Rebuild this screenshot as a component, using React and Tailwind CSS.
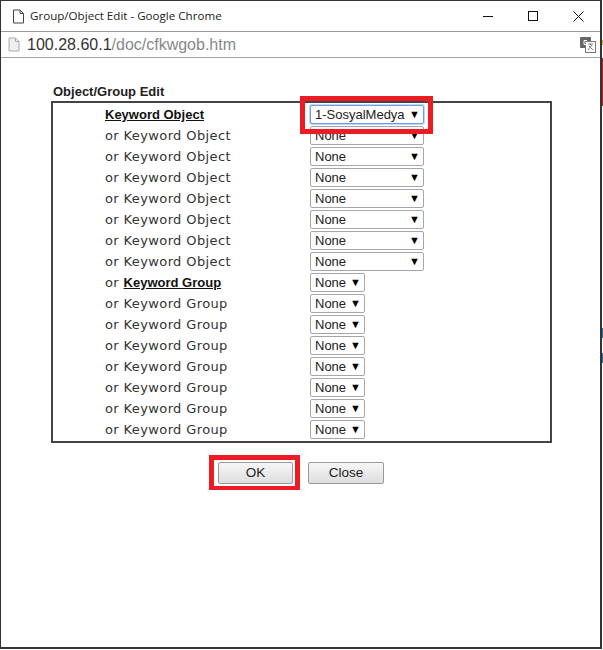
import React from 'react';

const objectRows = [
  { label: 'Keyword Object', bold: true, value: '1-SosyalMedya', focus: true },
  ...Array(7).fill({ label: 'or Keyword Object', value: 'None' }),
];

const groupRows = [
  { label: 'Keyword Group', bold: true, prefix: true, value: 'None' },
  ...Array(7).fill({ label: 'or Keyword Group', value: 'None' }),
];

// looks like a closed native select
const FakeSelect = ({ value, wide, focus }) => (
  <div
    className={`h-[19px] flex items-center justify-between bg-white rounded-[2px] border pl-[4px] pr-[3px] text-[13px] text-[#222] ${wide ? 'w-[114px]' : 'w-[55px]'} ${focus ? 'border-[#6d9eeb] shadow-[0_0_0_1px_#c4d7f7]' : 'border-[#a6a6a6]'}`}
  >
    <span className="leading-none">{value}</span>
    <span className="text-[11px] leading-none text-black">▼</span>
  </div>
);

const Row = ({ row, wide }) => (
  <div className="h-[21px] flex items-center">
    <div className="w-[205px] pl-[52px] shrink-0 text-[13px] whitespace-nowrap text-[#333]">
      {row.bold ? (
        <>
          {row.prefix && <span className="font-['DejaVu_Sans',sans-serif] tracking-[0.38px]">or </span>}
          <span className="font-bold underline text-[#111]">{row.label}</span>
        </>
      ) : (
        <span className="font-['DejaVu_Sans',sans-serif] tracking-[0.38px]">{row.label}</span>
      )}
    </div>
    <div className="pl-[52px]">
      <FakeSelect value={row.value} wide={wide} focus={row.focus} />
    </div>
  </div>
);

export default function App() {
  return (
    <div className="relative w-[603px] h-[650px] overflow-hidden bg-white font-['Liberation_Sans',Arial,sans-serif]">
      <div className="h-[649px] w-[602px] border border-[#333] border-b-2 border-r-2 bg-white flex flex-col">
        {/* Title bar */}
        <div className="h-[31px] shrink-0 flex items-center border-b border-[#999]">
          <svg className="ml-[11px]" width="13" height="15" viewBox="0 0 13 15" fill="none" stroke="#444" strokeWidth="1">
            <path d="M1.5 1h6.5l3.5 3.5v9.5h-10z M8 1v3.5h3.5" />
          </svg>
          <span className="ml-[5px] text-[11.6px] text-[#222] font-['Open_Sans',sans-serif]">Group/Object Edit - Google Chrome</span>
          <div className="ml-auto flex items-center pr-[16px] gap-[35px]">
            <svg width="10" height="10" viewBox="0 0 10 10" stroke="#111" strokeWidth="1"><path d="M0 5.5h10" /></svg>
            <svg width="10" height="10" viewBox="0 0 10 10" fill="none" stroke="#111" strokeWidth="1"><rect x="0.5" y="0.5" width="9" height="9" /></svg>
            <svg width="11" height="11" viewBox="0 0 11 11" stroke="#111" strokeWidth="1"><path d="M0.5 0.5l10 10M10.5 0.5l-10 10" /></svg>
          </div>
        </div>

        {/* Address bar */}
        <div className="h-[26px] shrink-0 flex items-center border-b border-[#a6a6a6]">
          <svg className="ml-[7px]" width="12" height="15" viewBox="0 0 12 15" fill="#eee" stroke="#aaa" strokeWidth="1">
            <path d="M1 1h6.5l3.5 3.5v9.5h-10z M7.5 1v3.5h3.5" />
          </svg>
          <span className="ml-[7px] text-[16px] leading-none text-[#333]">
            100.28.60.1<span className="text-[#888]">/doc/cfkwgob.htm</span>
          </span>
          <svg className="ml-auto mr-[4px]" width="16" height="16" viewBox="0 0 16 16">
            <rect x="0" y="0" width="11" height="11" rx="1" fill="#666" />
            <rect x="5.5" y="4.5" width="10" height="11" fill="#fff" stroke="#777" />
            <path d="M8 7h5M10.5 7v1M8 13l4-5M9 9l4 4" stroke="#777" fill="none" />
            <path d="M7 3.5h-3v4h3v-2h-1.5" stroke="#fff" fill="none" />
          </svg>
        </div>

        {/* Page body */}
        <div className="pl-[50px] pt-[25px]">
          <div className="h-[18px] pl-[2px] text-[13px] font-bold leading-[18px] text-[#222]">Object/Group Edit</div>
          <div className="w-[501px] h-[342px] border-2 border-[#444] pt-[1px]">
            {objectRows.map((row, i) => <Row key={i} row={row} wide />)}
            {groupRows.map((row, i) => <Row key={i} row={row} />)}
          </div>
          <div className="flex pl-[167px] gap-[15px] pt-[19px]">
            <button className="w-[75px] h-[22px] border border-[#999] rounded-[2px] bg-gradient-to-b from-[#f6f6f6] to-[#dedede] text-[13.5px] text-[#222]">OK</button>
            <button className="w-[76px] h-[22px] border border-[#999] rounded-[2px] bg-gradient-to-b from-[#f6f6f6] to-[#dedede] text-[13.5px] text-[#222]">Close</button>
          </div>
        </div>
      </div>

      {/* Sliver of the page behind the popup, at the right edge */}
      <div className="absolute left-[602px] top-[40px] w-px h-[5px] bg-[#d8b93a]" />
      <div className="absolute left-[602px] top-[58px] w-px h-[48px] bg-[#a8262c]" />
      <div className="absolute left-[602px] top-[328px] w-px h-[10px] bg-[#2f6da3]" />
      <div className="absolute left-[602px] top-[353px] w-px h-[10px] bg-[#2f6da3]" />

      {/* Red annotation boxes on top of the screenshot */}
      <div className="absolute left-[300px] top-[96px] w-[133px] h-[38px] border-[5px] border-[#ed1c24]" />
      <div className="absolute left-[209px] top-[455px] w-[91px] h-[35px] border-[5px] border-b-[4px] border-[#ed1c24]" />
    </div>
  );
}
